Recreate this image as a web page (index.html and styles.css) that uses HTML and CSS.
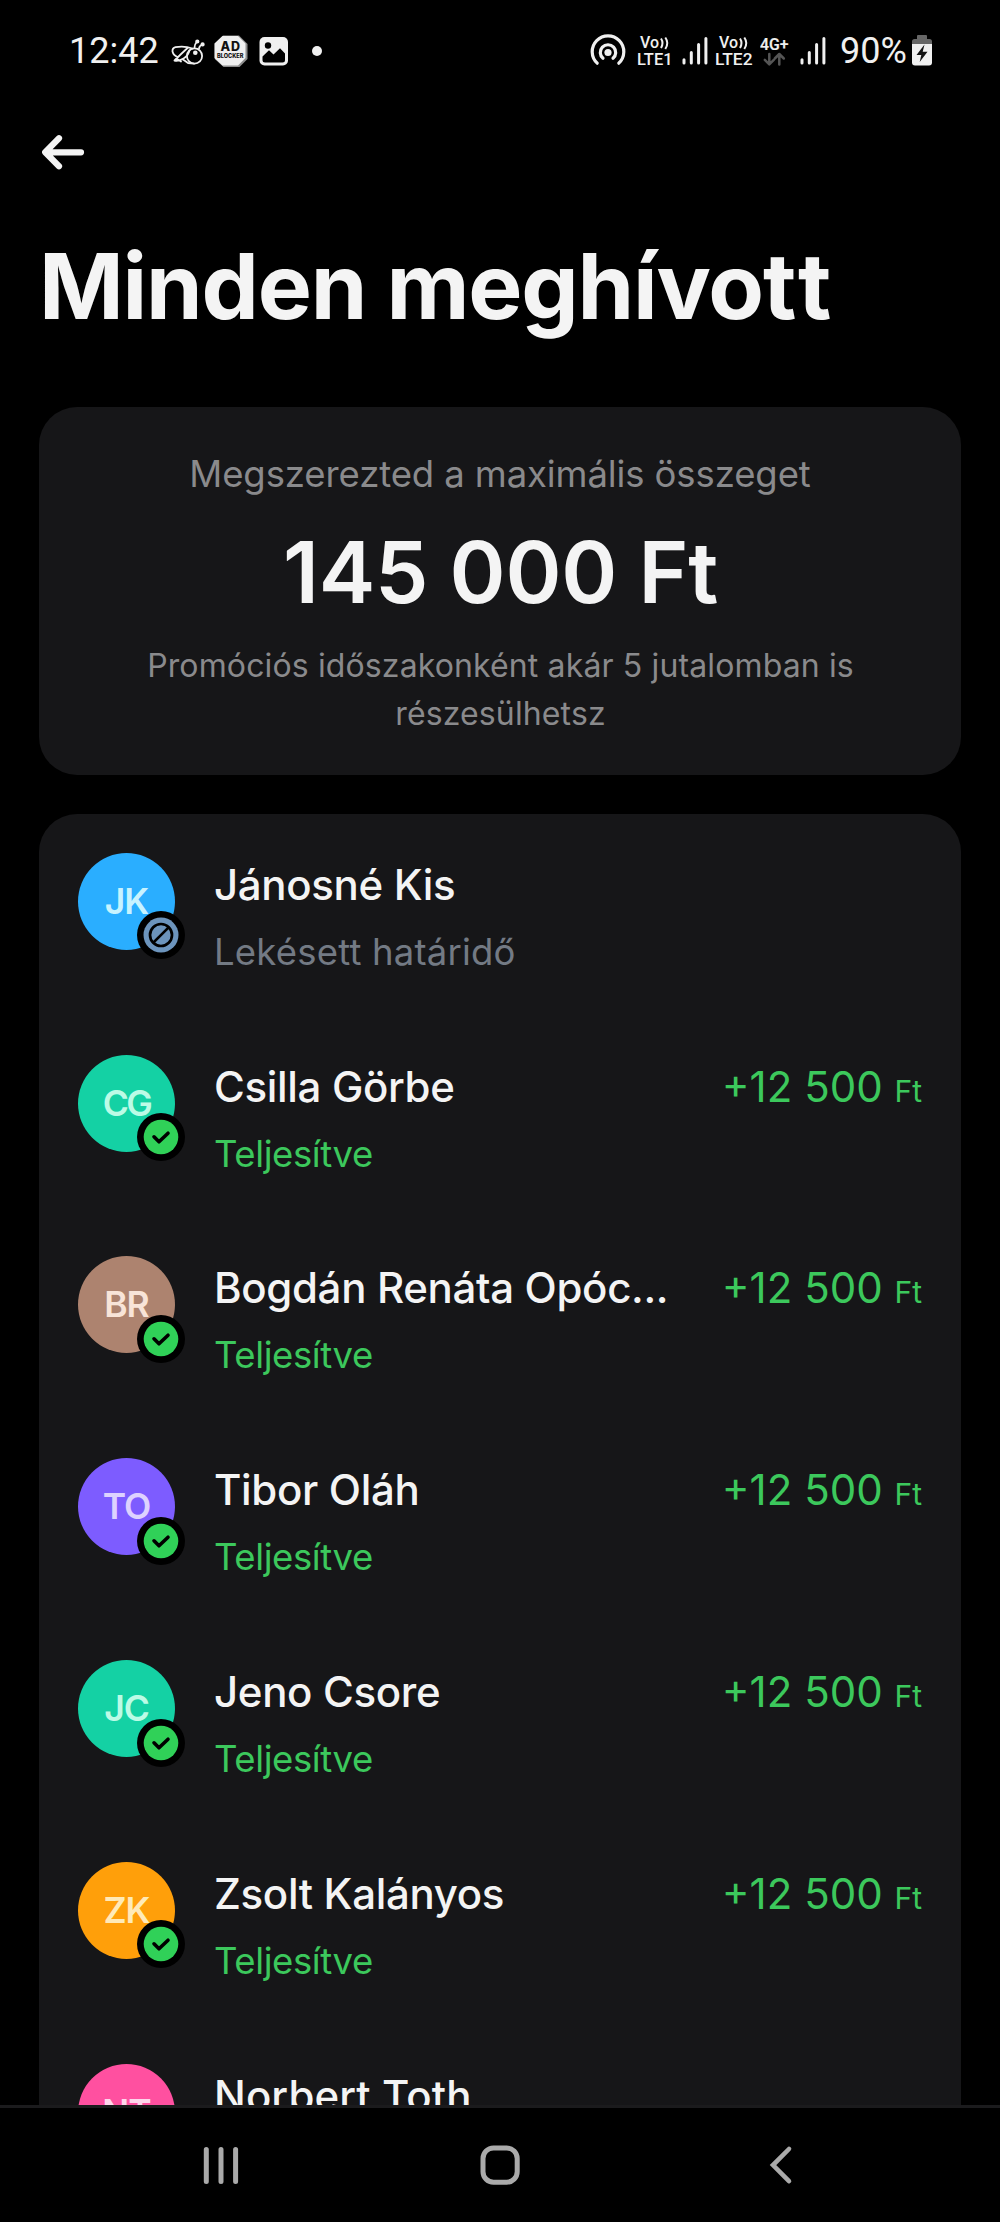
FILE: index.html
```html
<!DOCTYPE html>
<html lang="hu">
<head>
<meta charset="utf-8">
<title>Minden meghívott</title>
<link rel="stylesheet" href="styles.css">
</head>
<body>
<svg width="0" height="0" class="defs">
  <symbol id="done" viewBox="0 0 48 48">
    <circle cx="24" cy="24" r="24" fill="#000"/><circle cx="24" cy="24" r="17.3" fill="#30d158"/>
    <path d="M17 23.800l5 5 9-8.600" fill="none" stroke="#000" stroke-width="3.600" stroke-linecap="round" stroke-linejoin="round"/>
  </symbol>
  <symbol id="missed" viewBox="0 0 48 48">
    <circle cx="24" cy="24" r="24" fill="#000"/><circle cx="24" cy="24" r="17.500" fill="#6c94bc"/>
    <circle cx="24" cy="24" r="11" fill="none" stroke="#000" stroke-width="2.700"/>
    <path d="M16.600 31.400L31.400 16.600" stroke="#000" stroke-width="2.700"/>
  </symbol>
  <symbol id="signal" viewBox="0 0 26 40">
    <path d="M2 33v-3.200M9.300 33V22.500M16.600 33V14.500M23.900 33V8.500" stroke="#f0f0f0" stroke-width="3" stroke-linecap="round"/>
  </symbol>
</svg>
<div class="screen">
  <header class="status">
    <div class="status-left">
      <span class="clock">12:42</span>
      <svg class="bee" width="34" height="40" viewBox="0 0 34 40" fill="none" stroke="#f0f0f0" stroke-width="1.800" stroke-linecap="round" stroke-linejoin="round">
        <circle cx="23.500" cy="26" r="7.600"/><path d="M21.500 18.500Q13 15.500 4.500 17.200Q1.200 18 1.500 21.500Q2.500 25.500 6.500 27M16.500 18Q10 24 3.500 30.500Q8 31.500 12.500 28.500Q17 26 18.500 20.500M12 29.500L17 33L23 33.600M6 29l4 2.500M23.500 17.500Q23.500 14.500 26 11.500M28 18.500Q28.500 15.500 31.500 14.500"/>
        <circle cx="24.300" cy="22.800" r="2.300" fill="#f0f0f0" stroke="none"/><circle cx="26.300" cy="11.500" r="1.200" fill="#f0f0f0"/><circle cx="31.600" cy="14.400" r="1.200" fill="#f0f0f0"/>
      </svg>
      <svg class="adblock" width="34" height="40" viewBox="0 0 34 40">
        <path d="M9 5.500h16l8.500 8.500v15l-8 8H9.500L.8 29V13.500z" fill="#8d8d8d"/>
        <path d="M8.500 6h15.500l7.500 7.500v14.500l-7.500 7.500H8.500L.5 28V13.500z" fill="#f0f0f0"/>
        <text x="6.500" y="20.500" font-family="Inter, sans-serif" font-weight="800" font-size="12.500" textLength="19.500" fill="#111">AD</text>
        <text x="3" y="28" font-family="Inter, sans-serif" font-weight="800" font-size="6" textLength="26.500" lengthAdjust="spacingAndGlyphs" fill="#111">BLOCKER</text>
      </svg>
      <svg class="photo" width="30" height="40" viewBox="0 0 30 40">
        <rect x=".5" y="7" width="28.500" height="28.500" rx="5" fill="#f0f0f0"/><circle cx="9" cy="15.500" r="3.200" fill="#000"/>
        <path d="M3.500 30v-3.500l6.500-6.200 4.500 4.200 6.500-6.200 5 5.200v6.500q0 2.500-2.500 2.500H6q-2.500 0-2.500-2.500z" fill="#000"/>
      </svg>
      <i class="dot"></i>
    </div>
    <div class="status-right">
      <svg class="hotspot" width="36" height="40" viewBox="0 0 36 40" fill="none" stroke="#f0f0f0" stroke-width="3.200" stroke-linecap="round">
        <circle cx="18" cy="22.500" r="3.600" fill="#f0f0f0" stroke="none"/><path d="M13 28.300a7.700 7.700 0 1 1 10 0M7.200 33.200a15.800 15.800 0 1 1 21.600 0"/>
      </svg>
      <svg class="volte" width="36" height="40" viewBox="0 0 36 40" font-family="Roboto, sans-serif" fill="#f0f0f0" font-weight="700">
        <text x="3" y="18.300" font-size="16" font-weight="500" textLength="19" lengthAdjust="spacingAndGlyphs">Vo</text><path d="M24 8.500q3 4.500 0 9.500M28.300 7.500q4 5.500 0 11.500" fill="none" stroke="#f0f0f0" stroke-width="2"/>
        <text x="0" y="34.800" font-size="17" font-weight="500" textLength="35.500" lengthAdjust="spacingAndGlyphs">LTE1</text>
      </svg>
      <svg class="signal" width="26" height="40"><use href="#signal"/></svg>
      <svg class="volte" width="38" height="40" viewBox="0 0 38 40" font-family="Roboto, sans-serif" fill="#f0f0f0" font-weight="700">
        <text x="4" y="18.300" font-size="16" font-weight="500" textLength="19" lengthAdjust="spacingAndGlyphs">Vo</text><path d="M25 8.500q3 4.500 0 9.500M29.300 7.500q4 5.500 0 11.500" fill="none" stroke="#f0f0f0" stroke-width="2"/>
        <text x="0" y="34.800" font-size="17" font-weight="500" textLength="37.500" lengthAdjust="spacingAndGlyphs">LTE2</text>
      </svg>
      <svg class="net" width="30" height="40" viewBox="0 0 30 40">
        <text x="0" y="19.500" font-family="Roboto, sans-serif" font-size="16" font-weight="500" textLength="28.500" lengthAdjust="spacingAndGlyphs" fill="#f0f0f0" stroke="#f0f0f0" stroke-width=".2">4G+</text>
        <path d="M9.300 24v10M4.800 29.800l4.500 4.500 4.500-4.500M19.300 34.500v-10M14.800 28.500l4.500-4.500 4.500 4.500" fill="none" stroke="#555" stroke-width="2.500" stroke-linecap="round" stroke-linejoin="round"/>
      </svg>
      <svg class="signal2" width="26" height="40"><use href="#signal"/></svg>
      <span class="percent">90%</span>
      <svg class="battery" width="20" height="40" viewBox="0 0 20 40">
        <path d="M5 6q0-1 1-1h8q1 0 1 1v3h2.500q2.500 0 2.500 2.500V14H0v-2.500Q0 9 2.500 9H5z" fill="#666"/><path d="M0 14h20v18.500q0 3-3 3H3q-3 0-3-3z" fill="#f0f0f0"/><path d="M12.500 14.500L4.500 25h4.800L7.700 32 15.500 21.800h-4.800z" fill="#111"/>
      </svg>
    </div>
  </header>
  <nav class="topbar">
    <svg width="44" height="40" viewBox="0 0 44 40" fill="none" stroke="#f4f4f4" stroke-width="6.200" stroke-linecap="round" stroke-linejoin="round"><path d="M40 20.300H5M18 6.300L4.200 20.300 18 34.300"/></svg>
  </nav>
  <h1 class="title">Minden meghívo<span class="wide">t</span>t</h1>
  <section class="summary">
    <p class="lead">Megszerezted a maximális összeget</p>
    <p class="total">145 000 Ft</p>
    <p class="note">Promóciós időszakonként akár 5 jutalomban is részesülhetsz</p>
  </section>
  <section class="list">
    <article class="row">
      <div class="avatar blue">JK<svg class="badge"><use href="#missed"/></svg></div>
      <div class="who"><p class="name">Jánosné Kis</p><p class="state missed">Lekésett határidő</p></div>
    </article>
    <article class="row">
      <div class="avatar teal round-letters">CG<svg class="badge"><use href="#done"/></svg></div>
      <div class="who"><p class="name">Csilla Görbe</p><p class="state">Teljesítve</p></div>
      <p class="amount">+12 500 <small>Ft</small></p>
    </article>
    <article class="row">
      <div class="avatar brown">BR<svg class="badge"><use href="#done"/></svg></div>
      <div class="who"><p class="name">Bogdán Renáta Opóc...</p><p class="state">Teljesítve</p></div>
      <p class="amount">+12 500 <small>Ft</small></p>
    </article>
    <article class="row">
      <div class="avatar violet">TO<svg class="badge"><use href="#done"/></svg></div>
      <div class="who"><p class="name">Tibor Oláh</p><p class="state">Teljesítve</p></div>
      <p class="amount">+12 500 <small>Ft</small></p>
    </article>
    <article class="row">
      <div class="avatar teal">JC<svg class="badge"><use href="#done"/></svg></div>
      <div class="who"><p class="name">Jeno Csore</p><p class="state">Teljesítve</p></div>
      <p class="amount">+12 500 <small>Ft</small></p>
    </article>
    <article class="row">
      <div class="avatar orange">ZK<svg class="badge"><use href="#done"/></svg></div>
      <div class="who"><p class="name">Zsolt Kalányos</p><p class="state">Teljesítve</p></div>
      <p class="amount">+12 500 <small>Ft</small></p>
    </article>
    <article class="row">
      <div class="avatar pink">NT</div>
      <div class="who"><p class="name loose">Norbert Toth</p></div>
    </article>
  </section>
  <footer class="navbar">
    <svg width="36" height="40" viewBox="0 0 36 40" stroke="#aaa" stroke-width="5" stroke-linecap="round"><path d="M3.300 4.500v32M18 4.500v32M32.600 4.500v32"/></svg>
    <svg class="home" width="40" height="40" viewBox="0 0 40 40"><rect x="3" y="3" width="34.200" height="34.200" rx="10.500" fill="none" stroke="#aaa" stroke-width="5"/></svg>
    <svg width="24" height="40" viewBox="0 0 24 40" fill="none" stroke="#aaa" stroke-width="4.600" stroke-linecap="round"><path d="M20 4L4 20.100 20 36.200"/></svg>
  </footer>
</div>
</body>
</html>
```

FILE: styles.css
```css
* { box-sizing: border-box; }
body { margin: 0; background: #000; color: #f4f4f4; font-family: Inter, "Liberation Sans", sans-serif; }
p, h1 { margin: 0; white-space: nowrap; }
svg { display: block; flex: none; }
.defs { position: absolute; }
.screen { width: 1000px; height: 2222px; display: flex; flex-direction: column; overflow: hidden; }

.status { flex: none; height: 104px; padding: 30px 68px 0 69px; display: flex; justify-content: space-between; font-family: Roboto, sans-serif; font-size: 36px; line-height: 42px; color: #f0f0f0; }
.status-left, .status-right { display: flex; align-items: flex-start; }
.clock { width: 102px; }
.adblock { margin-left: 9px; }
.photo { margin-left: 11px; }
.dot { width: 10px; height: 10px; margin: 16px 0 0 23px; border-radius: 50%; background: #f0f0f0; }
.volte { margin-left: 11px; }
.signal { margin-left: 9px; }
.signal + .volte { margin-left: 7px; }
.net { margin-left: 7px; }
.signal2 { margin-left: 10px; }
.percent { width: 72px; margin-left: 14px; }

.topbar { flex: none; height: 127px; padding: 28px 0 0 41px; }
.title { flex: none; height: 110px; padding-left: 39px; font-size: 91px; line-height: 110px; font-weight: 700; letter-spacing: -1.200px; }
.wide { letter-spacing: 1.700px; }

.summary { flex: none; height: 368px; margin: 66px 39px 0; padding: 43px 80px 0; border-radius: 38px; background: #161618; text-align: center; color: #8a8a8c; }
.lead { font-size: 36.500px; line-height: 48px; letter-spacing: -0.110px; }
.total { margin-top: 24.500px; padding-left: 1px; font-size: 85px; line-height: 100px; font-weight: 600; letter-spacing: -0.200px; color: #f4f4f4; }
.note { margin-top: 19.500px; padding-left: 1px; font-size: 32px; line-height: 48px; letter-spacing: 0.130px; white-space: normal; }

.list { flex: 1; min-height: 0; overflow: hidden; margin: 39px 39px 0; padding: 38.700px 39px 0; border-radius: 38px 38px 0 0; background: #161618; }
.row { height: 201.850px; display: flex; align-items: flex-start; }
.avatar { position: relative; flex: none; width: 97px; height: 97px; margin-right: 39px; border-radius: 50%; font-size: 35.500px; line-height: 97px; font-weight: 600; letter-spacing: -1px; text-align: center; }
.round-letters { letter-spacing: -2.500px; }
.badge { position: absolute; left: 58.600px; top: 58.500px; width: 48px; height: 48px; }
.blue { background: #2aaeff; color: #c8f3ff; }
.teal { background: #14d1a4; color: #bcfbe6; }
.brown { background: #ad836f; color: #f8e4d8; }
.violet { background: #7d5cff; color: #ddd2ff; }
.orange { background: #ff9f0a; color: #ffeab8; }
.pink { background: #ff50a0; color: #ffd6ec; }
.who { flex: 1; min-width: 0; }
.name { font-size: 42px; line-height: 64px; font-weight: 500; letter-spacing: -0.330px; }
.loose { letter-spacing: 0.120px; }
.state { margin-top: 11px; font-size: 36.500px; line-height: 48px; letter-spacing: -0.400px; color: #3cc85c; }
.missed { letter-spacing: 0.200px; color: #737a84; }
.amount { font-size: 42px; line-height: 64px; color: #3cc85c; }
.amount small { font-size: 30px; }

.navbar { flex: none; height: 117px; padding: 37px 207px 0 203px; border-top: 3px solid #1b1b1d; display: flex; justify-content: space-between; align-items: flex-start; }
.home { margin-right: 8px; }
```
